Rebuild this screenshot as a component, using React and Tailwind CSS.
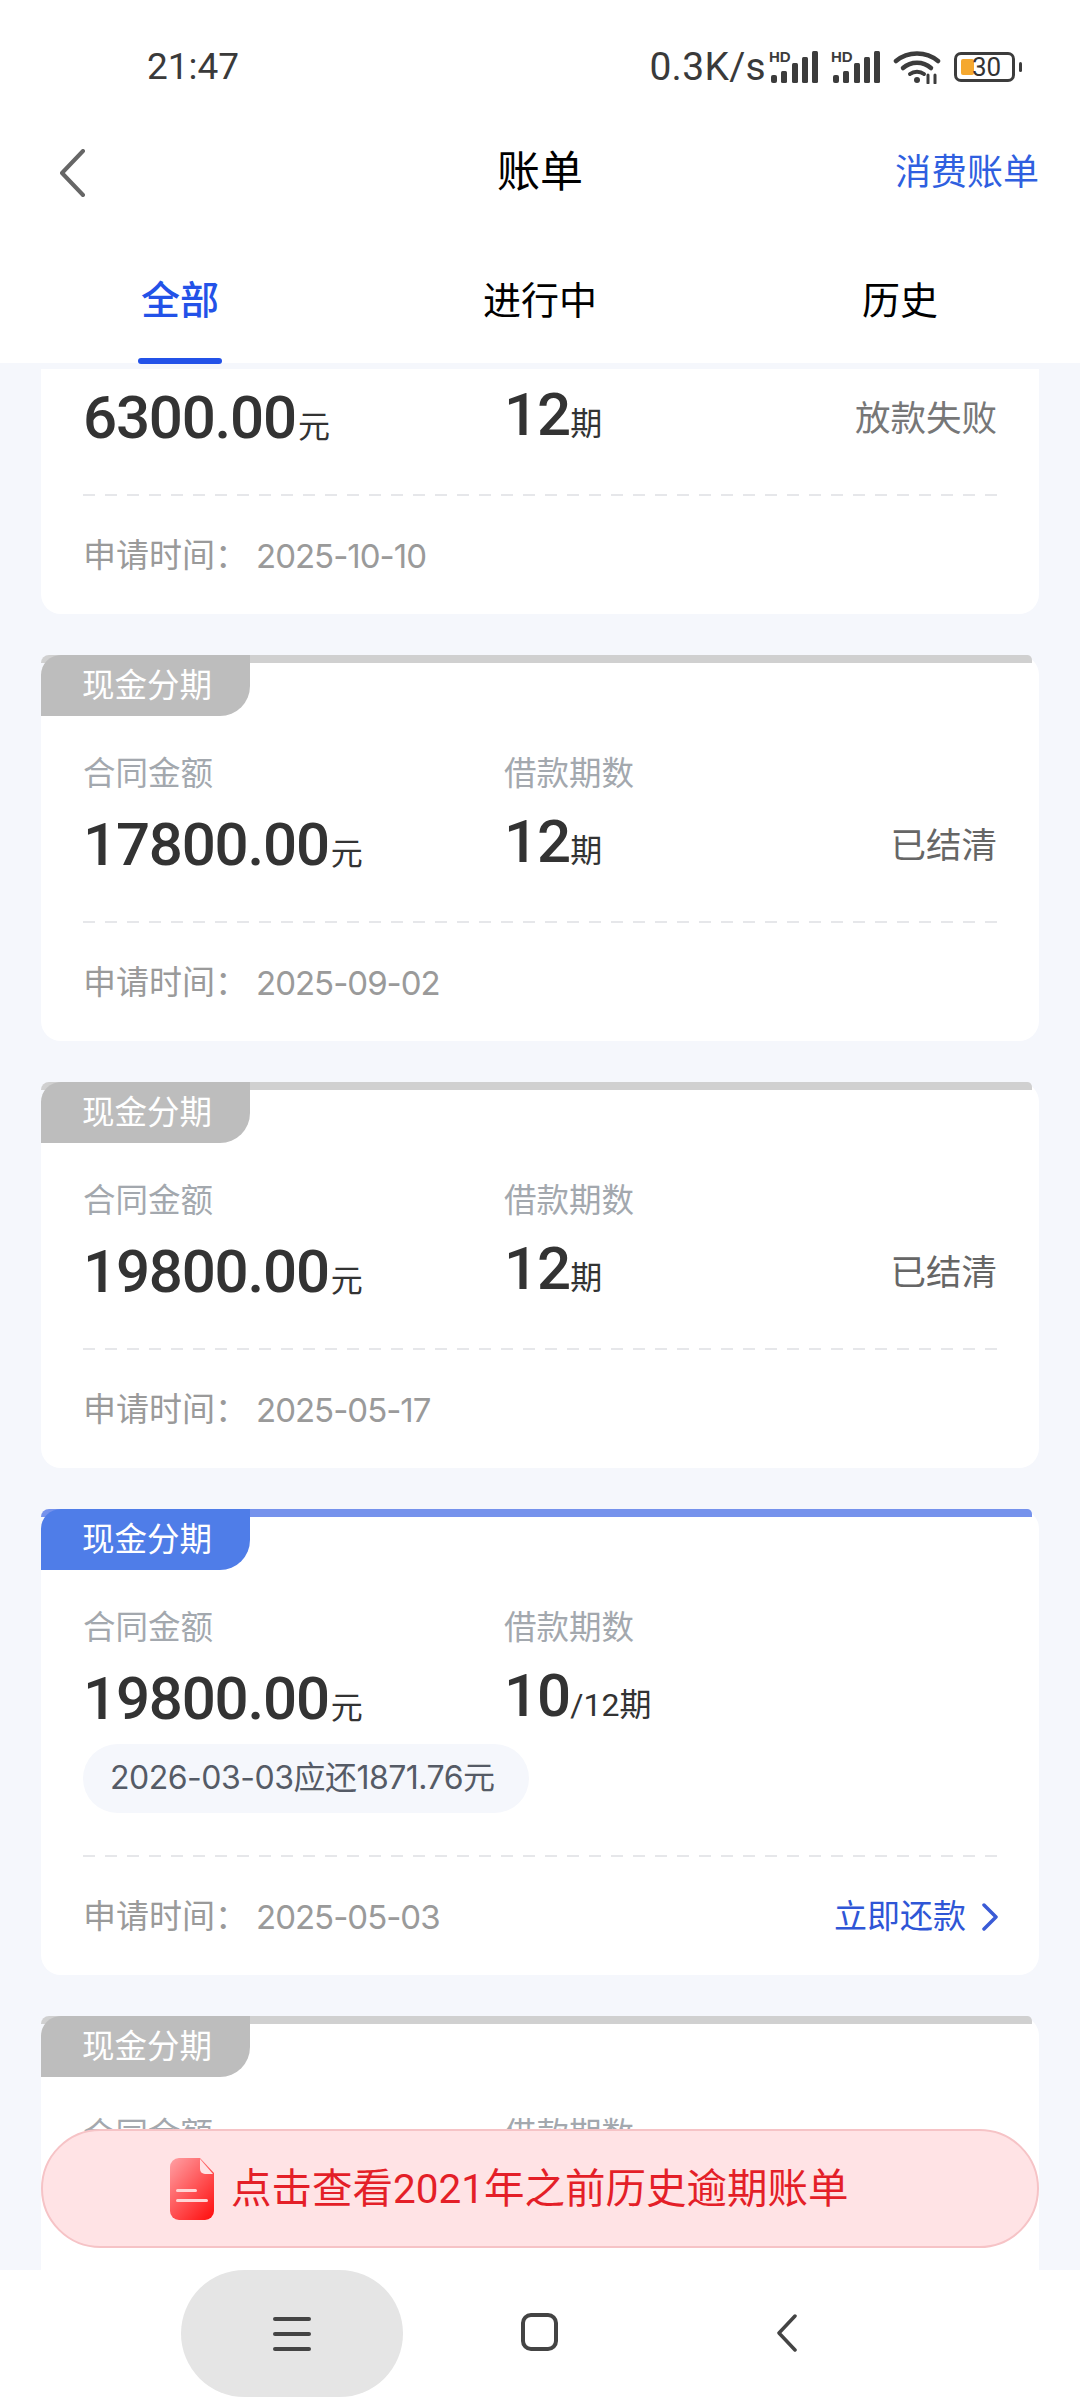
const SANS = "font-['Roboto','Noto_Sans_CJK_SC',sans-serif]";
const NUM = "font-['Inter','Noto_Sans_CJK_SC',sans-serif]";

function Signal() {
  return (
    <span className="relative block w-[50px] h-[32px]">
      <span className="absolute left-0 -top-[1px] font-['Liberation_Sans',sans-serif] font-bold text-[15px] leading-[14px] text-[#3c3c3c]">HD</span>
      <svg className="absolute inset-0" width="50" height="32" viewBox="0 0 50 32" fill="#3c3c3c">
        <rect x="2" y="24" width="6" height="8" rx="2" />
        <rect x="12" y="20" width="6" height="12" rx="1.5" />
        <rect x="23" y="12" width="6" height="20" rx="1.5" />
        <rect x="33" y="6" width="6" height="26" rx="1.5" />
        <rect x="43" y="0" width="6" height="32" rx="1.5" />
      </svg>
    </span>
  );
}

function StatusBar() {
  return (
    <div className={`h-[134px] flex items-center justify-between pl-[147px] pr-[58px] text-[#3a3a3a] ${SANS}`}>
      <span className="text-[37px] leading-[40px]">21:47</span>
      <div className="flex items-center">
        <span className="text-[39px] tracking-[0.3px] leading-[40px] mr-[3px]">0.3K/s</span>
        <Signal />
        <span className="w-[12px]" />
        <Signal />
        <svg className="ml-[12px]" width="48" height="34" viewBox="0 0 48 34" fill="none" stroke="#3c3c3c" strokeLinecap="round">
          <path d="M3 11 C15 1 33 1 45 11" strokeWidth="4.5" />
          <path d="M10 18 C18 11 30 11 38 18" strokeWidth="4.5" />
          <path d="M17 24 C21 21 27 21 31 24" strokeWidth="4" />
          <circle cx="24" cy="30" r="3" fill="#3c3c3c" stroke="none" />
          <path d="M35 33 V25 M42 33 V25" strokeWidth="3" />
        </svg>
        <span className="relative ml-[13px] block w-[68px] h-[30px]">
          <span className="absolute left-0 top-0 w-[61px] h-[30px] rounded-[7px] border-[3px] border-[#3c3c3c]" />
          <span className="absolute left-[7px] top-[7px] w-[13px] h-[16px] rounded-[2px] bg-[#f5a82f]" />
          <span className="absolute left-[18px] top-0 text-[26px] leading-[30px] text-[#333]">30</span>
          <span className="absolute right-0 top-[10px] w-[3px] h-[10px] rounded-[2px] bg-[#3c3c3c]" />
        </span>
      </div>
    </div>
  );
}

function TitleBar() {
  return (
    <div className="relative h-[76px] flex items-center justify-center">
      <svg className="absolute left-[58px] top-[15px]" width="30" height="48" viewBox="0 0 30 48" fill="none" stroke="#666" strokeWidth="4" strokeLinecap="round" strokeLinejoin="round">
        <path d="M25 2 L4 24 L25 46" />
      </svg>
      <span className={`text-[43px] leading-[52px] text-black ${SANS}`}>账单</span>
      <span className={`absolute right-[41px] top-[17px] text-[36px] leading-[44px] text-[#2f5fe0] ${SANS}`}>消费账单</span>
    </div>
  );
}

function Tabs() {
  return (
    <div className={`grid grid-cols-3 h-[153px] pt-[60px] text-[38px] leading-[62px] text-black ${SANS}`}>
      <div className="relative text-center text-[39px] font-medium text-[#2352e8]">
        全部
        <span className="absolute left-[138px] top-[88px] w-[84px] h-[6px] rounded-[3px] bg-[#2352e8]" />
      </div>
      <div className="text-center">进行中</div>
      <div className="text-center">历史</div>
    </div>
  );
}

function Dashed() {
  return <div className="h-[2px] bg-[repeating-linear-gradient(90deg,#e6e7ea_0,#e6e7ea_12px,transparent_12px,transparent_22px)]" />;
}

function Card({ amount, term, total, status, date, due, active }) {
  return (
    <div className={`relative w-[998px] mx-[41px] rounded-[20px] bg-white px-[42px] ${SANS}`}>
      <div className={`absolute left-0 top-0 right-[7px] h-[8px] rounded-tr-[12px] rounded-tl-[20px] ${active ? "bg-[#7592ec]" : "bg-[#d0d0d0]"}`} />
      <div className={`absolute left-0 top-0 w-[209px] h-[61px] rounded-tl-[20px] rounded-br-[30px] pl-[41px] text-[32.5px] leading-[62px] text-white ${active ? "bg-[#4f7de8]" : "bg-[#bdbdbd]"}`}>
        现金分期
      </div>
      <div className="pt-[99px] flex text-[32.5px] leading-[40px] text-[#a3a8ae]">
        <div className="w-[421px]">合同金额</div>
        <div>借款期数</div>
      </div>
      <div className="relative mt-[15px] flex items-baseline h-[72px] text-[#333]">
        <div className="w-[421px] flex items-baseline text-[60px] leading-[72px] font-medium">
          <span className="tracking-[-1.2px]">{amount}</span>
          <span className="ml-[2px] text-[32px] font-normal">元</span>
        </div>
        <div className="flex items-baseline text-[60px] leading-[66px] font-medium -translate-y-[3px]">
          <span className="tracking-[-1px]">{term}</span>
          <span className="text-[32px] font-normal">{total}</span>
        </div>
        {status && (
          <div className={`absolute right-0 top-[15px] text-[35.5px] leading-[44px] ${status === "放款失败" ? "text-[#777]" : "text-[#666]"}`}>
            {status}
          </div>
        )}
      </div>
      {due ? (
        <div className={`mt-[9px] w-[446px] h-[69px] rounded-full bg-[#f5f7fc] pl-[27px] text-[32px] tracking-[-0.5px] leading-[68px] text-[#555b66] ${NUM}`}>
          {due}
        </div>
      ) : null}
      <div className={due ? "mt-[42px]" : "mt-[40px]"}>
        <Dashed />
      </div>
      <div className="mt-[38px] h-[44px] flex items-center justify-between text-[#9a9a9a]">
        <div className="flex items-center">
          <span className="w-[173px] text-[33px] leading-[44px]">申请时间：</span>
          <span className={`text-[33px] tracking-[-1px] leading-[44px] ${NUM}`}>{date}</span>
        </div>
        {active && (
          <div className="flex items-center text-[33px] leading-[44px] text-[#2f56d6]">
            立即还款
            <svg className="ml-[16px] -mr-[1px]" width="16" height="28" viewBox="0 0 16 28" fill="none" stroke="#3a5bd6" strokeWidth="3.5" strokeLinecap="round" strokeLinejoin="round">
              <path d="M2 2 L14 14 L2 26" />
            </svg>
          </div>
        )}
      </div>
      <div className="h-[36px]" />
    </div>
  );
}

function Banner() {
  return (
    <div className="absolute left-[41px] top-[2129px] w-[998px] h-[119px] rounded-full bg-[#ffe3e5] border-2 border-[#f6c3c6] flex items-center pl-[127px]">
      <svg className="mr-[17px]" width="44" height="62" viewBox="0 0 44 62">
        <defs>
          <linearGradient id="doc" x1="0.1" y1="0" x2="0.9" y2="1">
            <stop offset="0" stopColor="#ff9a9e" />
            <stop offset="1" stopColor="#ff1212" />
          </linearGradient>
        </defs>
        <path d="M9 0 H30 L44 15 V53 a9 9 0 0 1 -9 9 H9 a9 9 0 0 1 -9 -9 V9 a9 9 0 0 1 9 -9 Z" fill="url(#doc)" />
        <path d="M30 1 L43 16 H35 a5 5 0 0 1 -5 -5 Z" fill="#ffe3e5" />
        <rect x="6" y="31" width="21" height="3" rx="1.5" fill="#ffd5d5" />
        <rect x="6" y="41" width="32" height="3" rx="1.5" fill="#ffd5d5" />
      </svg>
      <span className={`text-[40.5px] leading-[50px] text-[#e41f28] ${SANS}`}>点击查看2021年之前历史逾期账单</span>
    </div>
  );
}

function NavBar() {
  return (
    <div className="h-[130px] bg-white flex shrink-0">
      <div className="ml-[181px] w-[222px] h-[127px] rounded-[64px] bg-[#e5e5e5] flex flex-col items-center justify-center gap-[11px]">
        <span className="w-[38px] h-[4px] rounded-[2px] bg-[#444]" />
        <span className="w-[38px] h-[4px] rounded-[2px] bg-[#444]" />
        <span className="w-[38px] h-[4px] rounded-[2px] bg-[#444]" />
      </div>
      <div className="ml-[118px] mt-[43px] w-[37px] h-[38px] rounded-[10px] border-[4px] border-[#444]" />
      <svg className="ml-[218px] mt-[44px]" width="22" height="38" viewBox="0 0 22 38" fill="none" stroke="#444" strokeWidth="3.5" strokeLinecap="round" strokeLinejoin="round">
        <path d="M19 2 L3 19 L19 36" />
      </svg>
    </div>
  );
}

export default function App() {
  return (
    <div className="relative w-[1080px] h-[2400px] flex flex-col overflow-hidden bg-[#f5f7fc]">
      <div className="bg-white h-[363px] shrink-0">
        <StatusBar />
        <TitleBar />
        <Tabs />
      </div>
      <div className="flex-1 min-h-0 overflow-hidden pt-[6px] flex flex-col gap-[41px]">
        <div className="h-[245px] overflow-hidden shrink-0">
          <div className="-mt-[141px]">
            <Card amount="6300.00" term="12" total="期" status="放款失败" date="2025-10-10" />
          </div>
        </div>
        <Card amount="17800.00" term="12" total="期" status="已结清" date="2025-09-02" />
        <Card amount="19800.00" term="12" total="期" status="已结清" date="2025-05-17" />
        <Card amount="19800.00" term="10" total="/12期" date="2025-05-03" due="2026-03-03应还1871.76元" active />
        <Card amount="18800.00" term="12" total="期" date="2025-03-12" />
      </div>
      <NavBar />
      <Banner />
    </div>
  );
}
